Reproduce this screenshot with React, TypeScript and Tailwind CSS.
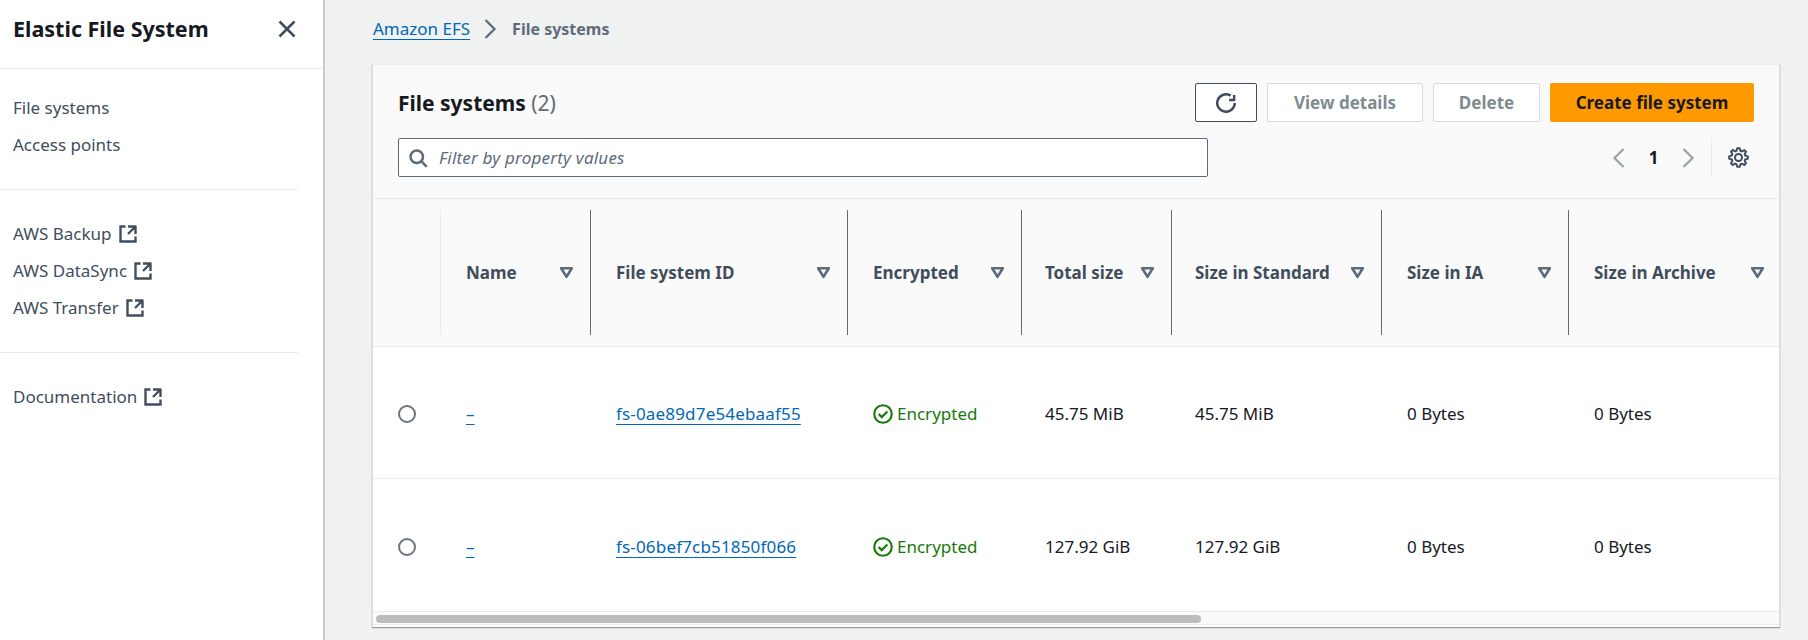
import React from "react";

const Ext = () => (
  <svg viewBox="0 0 16 16" className="w-[20px] h-[20px] shrink-0" fill="none" stroke="currentColor" strokeWidth="1.9">
    <path d="M14 8.01v-6H8M14.02 2 8 8" strokeLinejoin="round" />
    <path d="M6 2H2v12h12v-4" />
  </svg>
);

const Sort = () => (
  <svg viewBox="0 0 14 14" className="w-[15px] h-[15px] shrink-0 text-[#5f6b7a]" fill="none" stroke="currentColor" strokeWidth="2.4" strokeLinejoin="round">
    <path d="M2 3h10L7 11z" />
  </svg>
);

const Chevron = ({ left }: { left?: boolean }) => (
  <svg viewBox="0 0 16 16" className="w-[24px] h-[24px]" fill="none" stroke="currentColor" strokeWidth="1.5">
    <path d={left ? "M11 2 5 8l6 6" : "M5 2l6 6-6 6"} />
  </svg>
);

const Divider = () => <div className="h-px bg-[#e9ebed] mr-[25px]" />;

const NavItem = ({ label, ext }: { label: string; ext?: boolean }) => (
  <div className="h-[37px] flex items-center gap-[6px] pl-[13px] text-[#414d5c]">
    <span>{label}</span>
    {ext && <Ext />}
  </div>
);

const columns = ["", "Name", "File system ID", "Encrypted", "Total size", "Size in Standard", "Size in IA", "Size in Archive"];

const GRID = "grid grid-cols-[67px_150px_257px_174px_150px_210px_187px_1fr]";

const Row = ({ id, total, std, border }: { id: string; total: string; std: string; border?: boolean }) => (
  <div className={`${GRID} items-center text-[#16191f] ${border ? "h-[132px] pt-[2px] border-b border-[#e9ebed]" : "h-[132px] pt-[3px]"}`}>
    <div className="pl-[25px] flex">
      <span className="w-[18px] h-[18px] rounded-full border-2 border-[#6b7580] bg-white" />
    </div>
    <div className="pl-[26px]">
      <span className="text-[#0067b8] underline underline-offset-4">–</span>
    </div>
    <div className="pl-[26px]">
      <span className="text-[#0067b8] underline underline-offset-4 tracking-[0.17px]">{id}</span>
    </div>
    <div className="pl-[26px] flex items-center gap-[4px] text-[#167a0a]">
      <svg viewBox="0 0 16 16" className="w-[20px] h-[20px] shrink-0" fill="none" stroke="currentColor" strokeWidth="1.7">
        <circle cx="8" cy="8" r="7" />
        <path d="m4.5 8 2.5 2.5L11.5 6" />
      </svg>
      <span>Encrypted</span>
    </div>
    <div className="pl-[24px]">{total}</div>
    <div className="pl-[24px]">{std}</div>
    <div className="pl-[26px]">0 Bytes</div>
    <div className="pl-[26px]">0 Bytes</div>
  </div>
);

export default function App() {
  return (
    <div className="flex h-[640px] w-[1808px] overflow-hidden bg-[#f0f2f2] text-[17px] leading-[22px] font-['Noto_Sans','Open_Sans',sans-serif]">
      <aside className="w-[325px] shrink-0 bg-white border-r-2 border-[#c9cdcf]">
        <div className="h-[69px] flex items-center justify-between pl-[13px] pr-[26px] pb-[10px] border-b border-[#e9ebed]">
          <h2 className="text-[21.5px] font-bold text-[#16191f]">Elastic File System</h2>
          <svg viewBox="0 0 16 16" className="w-[20px] h-[20px] text-[#414d5c]" fill="none" stroke="currentColor" strokeWidth="2">
            <path d="m2 2 12 12M14 2 2 14" />
          </svg>
        </div>
        <div className="pt-[20px] pb-[26px]">
          <NavItem label="File systems" />
          <NavItem label="Access points" />
        </div>
        <Divider />
        <div className="pt-[25px] pb-[26px]">
          <NavItem label="AWS Backup" ext />
          <NavItem label="AWS DataSync" ext />
          <NavItem label="AWS Transfer" ext />
        </div>
        <Divider />
        <div className="pt-[25px]">
          <NavItem label="Documentation" ext />
        </div>
      </aside>

      <main className="flex-1 min-w-0 pl-[47px] pr-[28px]">
        <nav className="h-[64px] pb-[6px] flex items-center text-[#5f6b7a]">
          <span className="ml-[1px] text-[#0067b8] underline underline-offset-4">Amazon EFS</span>
          <span className="ml-[8px] mr-[10px] flex text-[#5f6b7a]"><Chevron /></span>
          <span className="font-bold text-[16px]">File systems</span>
        </nav>

        <section className="bg-white border-l border-r border-[#d5dbdb] shadow-[0_1px_1px_#8d9a9e] h-[563px] overflow-hidden">
          <div className="h-[135px] bg-[#fafafa] border-t border-b border-[#e9ebed] pl-[25px] pr-[25px] pt-[18px]">
            <div className="flex items-center justify-between h-[39px]">
              <h1 className="text-[21px] font-bold text-[#16191f]">
                File systems <span className="font-normal text-[#5f6b7a]">(2)</span>
              </h1>
              <div className="flex gap-[10px] font-bold">
                <button className="w-[62px] h-[39px] flex items-center justify-center bg-white border border-[#414d5c] rounded-[2px] text-[#414d5c]">
                  <svg viewBox="0 0 16 16" className="w-[20px] h-[20px]" fill="none" stroke="currentColor" strokeWidth="2">
                    <path d="M15 8a7 7 0 1 1-3.3-5.94" />
                    <path d="M10.5 5.5h4v-4" strokeLinejoin="round" />
                  </svg>
                </button>
                <button className="w-[156px] h-[39px] bg-white border border-[#d5dbdb] rounded-[2px] text-[#7d8c8e]">View details</button>
                <button className="w-[107px] h-[39px] bg-white border border-[#d5dbdb] rounded-[2px] text-[#7d8c8e]">Delete</button>
                <button className="w-[204px] h-[39px] bg-[#ff9900] rounded-[2px] text-[#16191f]">Create file system</button>
              </div>
            </div>
            <div className="flex items-center justify-between h-[39px] mt-[16px]">
              <div className="w-[810px] h-[39px] flex items-center gap-[11px] pl-[9px] bg-white border border-[#5f6b7a] rounded-[2px] text-[#5f6b7a]">
                <svg viewBox="0 0 16 16" className="w-[20px] h-[20px] shrink-0" fill="none" stroke="currentColor" strokeWidth="2">
                  <circle cx="7" cy="7" r="5" />
                  <path d="m15 15-4.5-4.5" />
                </svg>
                <span className="italic tracking-[0.2px]">Filter by property values</span>
              </div>
              <div className="flex items-center h-[39px] pr-[5px]">
                <span className="flex text-[#9aa5a8]"><Chevron left /></span>
                <span className="w-[45px] text-center font-bold text-[#16191f]">1</span>
                <span className="flex text-[#9aa5a8]"><Chevron /></span>
                <span className="w-px h-[39px] bg-[#e9ebed] ml-[11px] mr-[16px]" />
                <svg viewBox="-1 -1 18 18" className="w-[21px] h-[21px] text-[#414d5c]" fill="none" stroke="currentColor" strokeWidth="1.7">
                  <path d="M13.3 5.2l1.1-2.1L13 1.7l-2.1 1.1c-.3-.2-.7-.3-1.1-.4L9 0H7l-.8 2.3c-.3.1-.7.2-1 .4L3.1 1.6 1.6 3.1l1.1 2.1c-.2.3-.3.7-.4 1L0 7v2l2.3.8c.1.4.3.7.4 1.1L1.6 13 3 14.4l2.1-1.1c.3.2.7.3 1.1.4L7 16h2l.8-2.3c.4-.1.7-.3 1.1-.4l2.1 1.1 1.4-1.4-1.1-2.1c.2-.3.3-.7.4-1.1L16 9V7l-2.3-.8c-.1-.3-.2-.7-.4-1Z" />
                  <circle cx="8" cy="8" r="3" />
                </svg>
              </div>
            </div>
          </div>

          <div className={`${GRID} h-[148px] items-center bg-[#fafafa] border-b border-[#e9ebed] font-bold text-[#414d5c]`}>
            {columns.map((name, i) =>
              i === 0 ? (
                <div key={i} />
              ) : (
                <div
                  key={name}
                  className={`h-[125px] flex items-center justify-between border-l ${i === 1 ? "border-[#e9ebed]" : "border-[#5f6b7a]"} ${i === 4 || i === 5 ? "pl-[23px]" : "pl-[25px]"} ${i === 7 ? "pr-[14px]" : "pr-[16px]"}`}
                >
                  <span className="whitespace-nowrap pt-[1px]">{name}</span>
                  <Sort />
                </div>
              )
            )}
          </div>

          <Row id="fs-0ae89d7e54ebaaf55" total="45.75 MiB" std="45.75 MiB" border />
          <Row id="fs-06bef7cb51850f066" total="127.92 GiB" std="127.92 GiB" />

          <div className="h-[14px] bg-[#fafafa] border-t border-b border-[#e9ebed] pt-[3px] pl-[3px]">
            <div className="w-[825px] h-[8px] rounded-full bg-[#bdbdbd]" />
          </div>
        </section>
      </main>
    </div>
  );
}
